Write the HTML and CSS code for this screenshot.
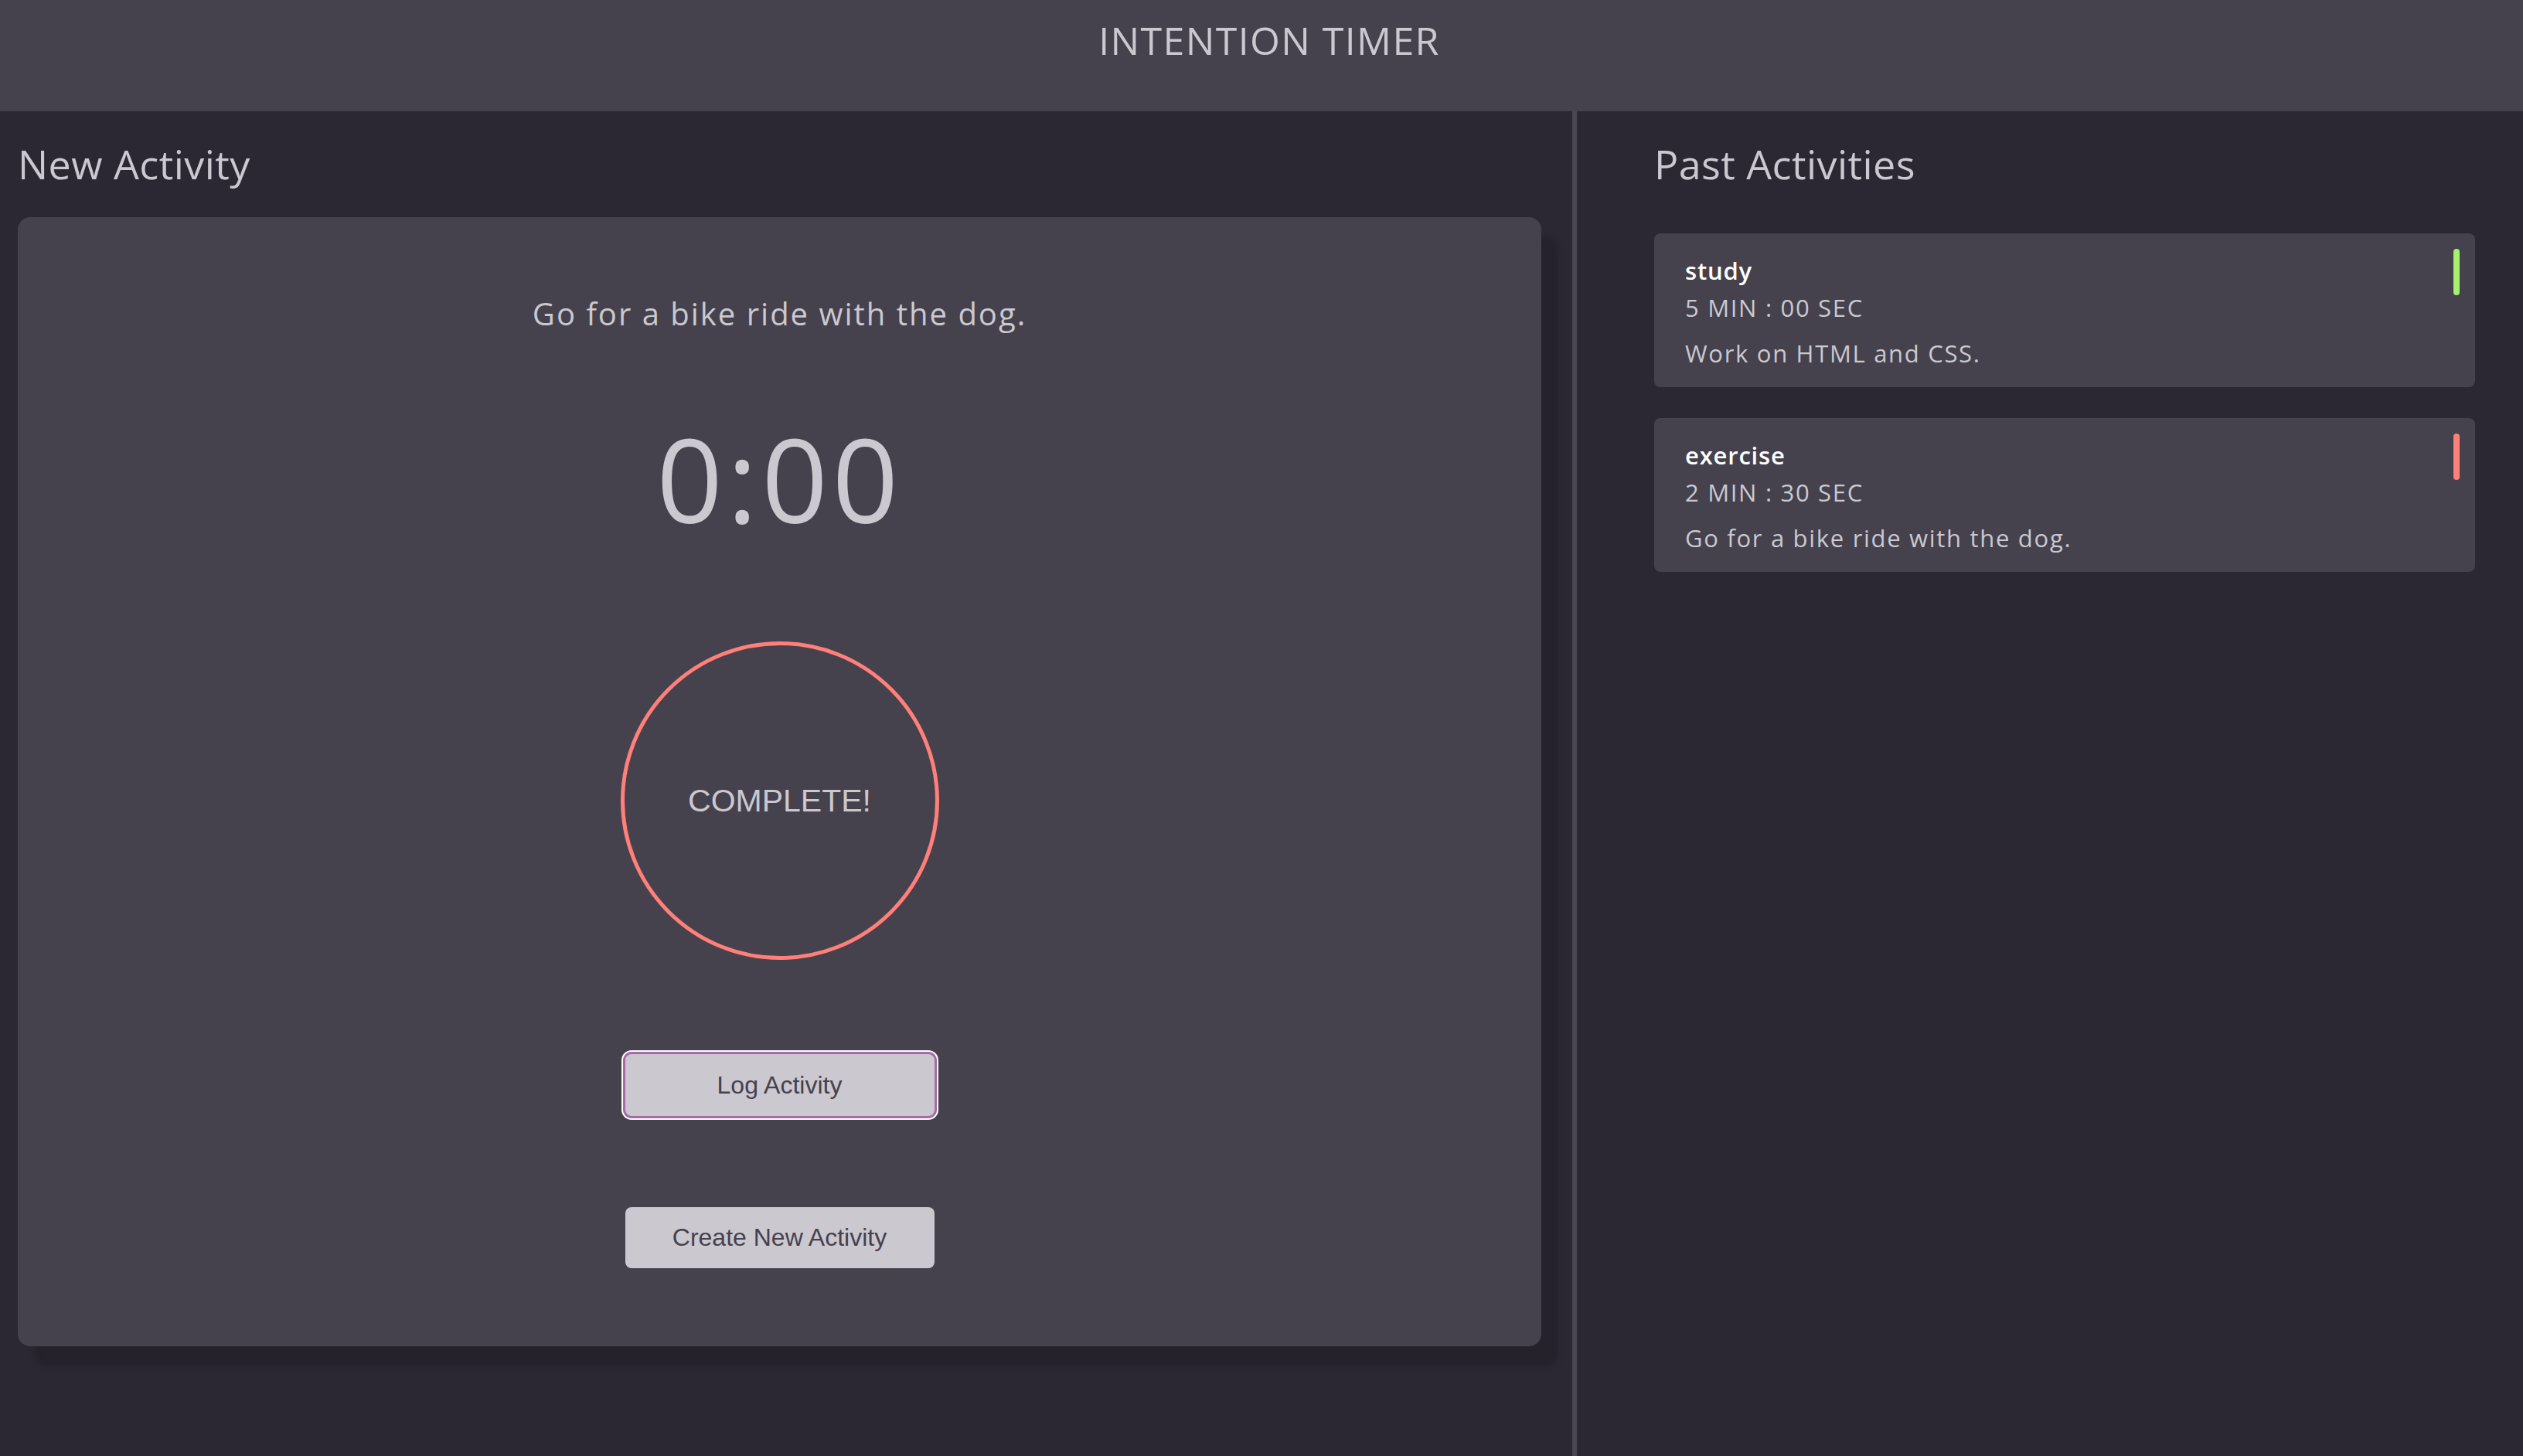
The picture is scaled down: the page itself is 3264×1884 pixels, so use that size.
FILE: index.html
```html
<!DOCTYPE html>
<html lang="en">
<head>
<meta charset="utf-8">
<title>Intention Timer</title>
<link rel="stylesheet" href="styles.css">
</head>
<body>
<header class="top-bar">
  <h1 class="app-title">INTENTION TIMER</h1>
</header>
<main class="layout">
  <section class="new-activity">
    <h2 class="section-title section-title-new">New Activity</h2>
    <div class="timer-card">
      <p class="timer-desc">Go for a bike ride with the dog.</p>
      <p class="timer-count">0:00</p>
      <div class="timer-ring">COMPLETE!</div>
      <button class="btn btn-log" type="button">Log Activity</button>
      <button class="btn btn-create" type="button">Create New Activity</button>
    </div>
  </section>
  <section class="past-activities">
    <h2 class="section-title section-title-past">Past Activities</h2>
    <ul class="past-list">
      <li class="past-card">
        <div class="past-info">
          <p class="past-category">study</p>
          <p class="past-time">5 MIN : 00 SEC</p>
          <p class="past-desc">Work on HTML and CSS.</p>
        </div>
        <span class="past-marker marker-study"></span>
      </li>
      <li class="past-card">
        <div class="past-info">
          <p class="past-category">exercise</p>
          <p class="past-time">2 MIN : 30 SEC</p>
          <p class="past-desc">Go for a bike ride with the dog.</p>
        </div>
        <span class="past-marker marker-exercise"></span>
      </li>
    </ul>
  </section>
</main>
</body>
</html>
```
FILE: styles.css
```css
* {
  box-sizing: border-box;
}

html, body {
  margin: 0;
  padding: 0;
}

body {
  background: #2b2833;
  color: #cbc8d0;
  font-family: "Open Sans", "DejaVu Sans", sans-serif;
  min-height: 100vh;
}

.top-bar {
  height: 144px;
  background: #45424d;
  padding-top: 27px;
  padding-left: 20px;
}

.app-title {
  margin: 0;
  font-size: 50px;
  line-height: 50px;
  font-weight: 400;
  letter-spacing: 1.4px;
  text-align: center;
  color: #cbc8d0;
}

.layout {
  display: grid;
  grid-template-columns: 2034px 1fr;
  min-height: calc(100vh - 144px);
}

.new-activity {
  padding: 43px 40px 0 23px;
}

.section-title {
  margin: 0 0 46px;
  font-size: 52px;
  line-height: 50px;
  font-weight: 400;
  letter-spacing: 0.45px;
  color: #cbc8d0;
}

.section-title-new {
  margin-bottom: 44px;
}

.timer-card {
  background: #45424d;
  border-radius: 16px;
  box-shadow: 22px 26px 6px #25222b;
  display: flex;
  flex-direction: column;
  align-items: center;
  padding: 105px 0 101px;
}

.timer-desc {
  margin: 0;
  font-size: 40px;
  line-height: 40px;
  letter-spacing: 2px;
}

.timer-count {
  margin: 118px 0 0;
  font-size: 150px;
  line-height: 150px;
  letter-spacing: 5.5px;
}

.timer-ring {
  margin-top: 136px;
  width: 412px;
  height: 412px;
  border: 5px solid #ff7f79;
  border-radius: 50%;
  display: flex;
  align-items: center;
  justify-content: center;
  font-family: "Liberation Sans", Arial, sans-serif;
  font-size: 41px;
  color: #cbc8d0;
}

.btn {
  width: 400px;
  border: none;
  border-radius: 8px;
  background: #cbc8d0;
  color: #45424d;
  font-family: "Liberation Sans", Arial, sans-serif;
  font-size: 32px;
  padding: 0;
}

.btn-log {
  margin-top: 122px;
  height: 80px;
  box-shadow: 0 0 0 3px #a66aa7, 0 0 0 5px #ffffff;
}

.btn-create {
  margin-top: 118px;
  height: 79px;
}

.past-activities {
  border-left: 6px solid #4a4753;
  padding: 43px 62px 0 100px;
}

.section-title-past {
  margin-bottom: 65px;
}

.past-list {
  list-style: none;
  margin: 0;
  padding: 0;
  display: flex;
  flex-direction: column;
  gap: 40px;
}

.past-card {
  background: #45424d;
  border-radius: 8px;
  display: flex;
  align-items: flex-start;
  padding: 20px 20px 0 40px;
}

.past-info {
  padding: 13px 0 28px;
}

.past-info p {
  margin: 0;
  font-size: 31px;
  line-height: 31px;
  letter-spacing: 1.7px;
}

.past-info .past-category {
  color: #ffffff;
  font-weight: 600;
  letter-spacing: 0.8px;
}

.past-info .past-time {
  margin-top: 17px;
}

.past-info .past-desc {
  margin-top: 28px;
}

.past-marker {
  margin-left: auto;
  width: 8px;
  height: 60px;
  border-radius: 4px;
}

.marker-study {
  background: #a6f06e;
}

.marker-exercise {
  background: #ff7f79;
}
```
